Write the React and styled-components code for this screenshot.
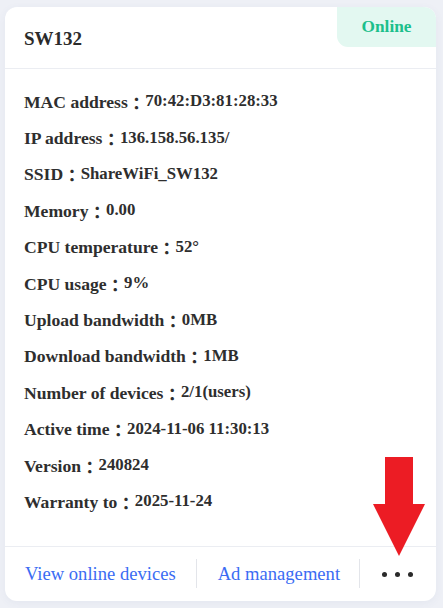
import React from 'react'
import styled, {createGlobalStyle} from 'styled-components'

const Global = createGlobalStyle`
body{
margin: 0;
background: #eef0f6;
font-family: "Liberation Serif", "Noto Sans CJK TC", serif;
}
`;

const Page = styled.div`
padding: 7px 7px 8px 5px;
`;
const Card = styled.section`
position: relative;
background: #fff;
border-radius: 12px;
box-shadow: rgba(60, 80, 140, 0.06) 0 2px 8px 0;
overflow: hidden;
`;
const Header = styled.div`
height: 62px;
display: flex;
align-items: center;
padding: 0 19px;
border-bottom: 1px solid #ebedf2;
box-sizing: border-box;
h3{
margin: 0;
padding-top: 2px;
font-size: 19px;
font-weight: bold;
color: #2b2b2b;
}
`;
const Badge = styled.div`
position: absolute;
top: 0;
right: 0;
width: 99px;
height: 40px;
display: flex;
align-items: center;
justify-content: center;
background: #e3f8f1;
color: #1cbf8c;
font-weight: bold;
font-size: 17.3px;
border-bottom-left-radius: 11px;
padding-bottom: 1px;
box-sizing: border-box;
`;
const Body = styled.div`
padding: 15px 19px 25px;
border-bottom: 1px solid #ebedf2;
`;
const Row = styled.div`
height: 36.4px;
display: flex;
align-items: center;
color: #2e2e2e;
font-weight: bold;
white-space: nowrap;
.label{
font-size: 17.6px;
}
.colon{
font-family: "Noto Sans CJK TC", sans-serif;
font-size: 17.5px;
}
.value{
font-size: 16.8px;
position: relative;
top: -1px;
}
`;
const Footer = styled.div`
height: 54px;
display: flex;
align-items: center;
padding: 0 0 0 20px;
`;
const Link = styled.a`
color: #3b6cf3;
font-size: 18.6px;
text-decoration: none;
cursor: pointer;
`;
const Divider = styled.span`
width: 1px;
height: 29px;
background: #e3e5ea;
margin: 0 ${p => p.$right}px 0 ${p => p.$left}px;
`;
const Dots = styled.div`
display: flex;
gap: 8px;
padding-top: 2px;
span{
width: 5px;
height: 5px;
border-radius: 50%;
background: #2a2a2a;
}
`;
const Arrow = styled.svg`
position: absolute;
left: 368px;
top: 450px;
`;

const rows = [
    ['MAC address', '70:42:D3:81:28:33'],
    ['IP address', '136.158.56.135/'],
    ['SSID', 'ShareWiFi_SW132'],
    ['Memory', '0.00'],
    ['CPU temperature', '52°'],
    ['CPU usage', '9%'],
    ['Upload bandwidth', '0MB'],
    ['Download bandwidth', '1MB'],
    ['Number of devices', '2/1(users)'],
    ['Active time', '2024-11-06 11:30:13'],
    ['Version', '240824'],
    ['Warranty to', '2025-11-24'],
]

const App = () => {
    return (
        <Page>
            <Global/>
            <Card>
                <Header>
                    <h3>SW132</h3>
                </Header>
                <Badge>Online</Badge>
                <Body>
                    {rows.map(([label, value]) => (
                        <Row key={label}>
                            <span className='label'>{label}</span>
                            <span className='colon'>：</span>
                            <span className='value'>{value}</span>
                        </Row>
                    ))}
                </Body>
                <Footer>
                    <Link>View online devices</Link>
                    <Divider $left={20} $right={21}/>
                    <Link>Ad management</Link>
                    <Divider $left={19} $right={22}/>
                    <Dots><span/><span/><span/></Dots>
                </Footer>
                <Arrow width="54" height="100" viewBox="0 0 54 100">
                    <polygon points="12,0 40,0 40,47 52,47 26,99 0,47 12,47" fill="#ec1c24"/>
                </Arrow>
            </Card>
        </Page>
    )
}
export default App
